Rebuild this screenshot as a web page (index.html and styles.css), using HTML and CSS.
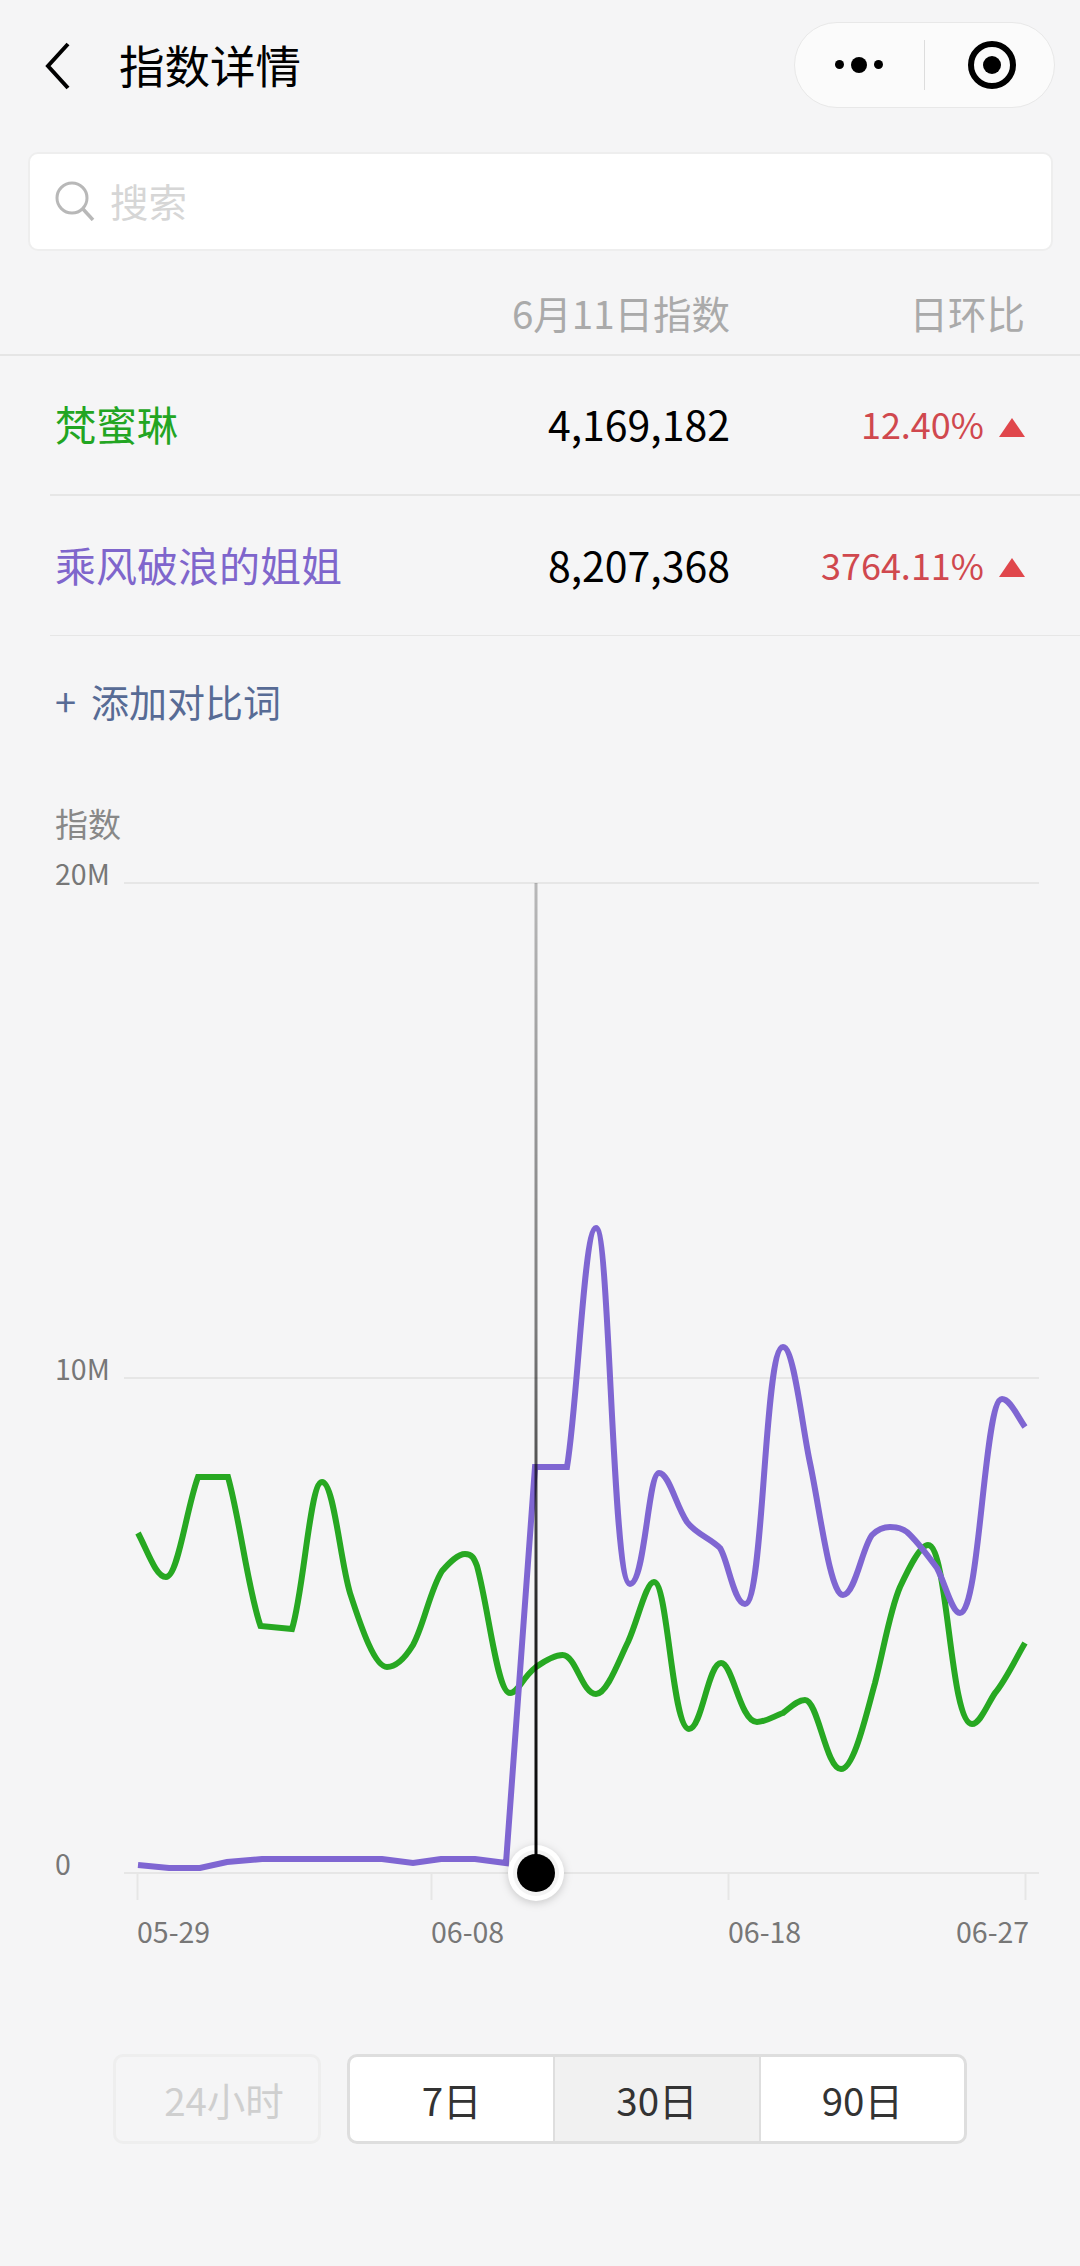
FILE: index.html
```html
<!DOCTYPE html>
<html lang="zh">
<head>
<meta charset="utf-8">
<title>指数详情</title>
<link rel="stylesheet" href="styles.css">
</head>
<body>
<div class="page">
  <header class="nav">
    <svg class="back" width="28" height="48" viewBox="0 0 28 48"><path d="M24 2 L4 24 L24 46" fill="none" stroke="#000" stroke-width="4"/></svg>
    <h1 class="title">指数详情</h1>
    <div class="capsule">
      <div class="cap-dots"><i class="dot small"></i><i class="dot big"></i><i class="dot small"></i></div>
      <i class="cap-line"></i>
      <div class="cap-target"><i class="target-core"></i></div>
    </div>
  </header>

  <div class="search">
    <svg class="search-icon" width="40" height="40" viewBox="0 0 40 40"><circle cx="17" cy="17" r="15" fill="none" stroke="#b8b8b8" stroke-width="3"/><path d="M28 28 L38 39" stroke="#b8b8b8" stroke-width="3.5" fill="none"/></svg>
    <span class="search-text">搜索</span>
  </div>

  <div class="table-head">
    <span class="col-value">6月11日指数</span>
    <span class="col-rate">日环比</span>
  </div>

  <div class="row row-thick">
    <span class="name green">梵蜜琳</span>
    <span class="col-value num">4,169,182</span>
    <span class="col-rate pct">12.40%<i class="tri"></i></span>
  </div>
  <div class="row">
    <span class="name purple">乘风破浪的姐姐</span>
    <span class="col-value num">8,207,368</span>
    <span class="col-rate pct">3764.11%<i class="tri"></i></span>
  </div>

  <div class="add"><span class="plus">+</span>添加对比词</div>

  <div class="chart-title">指数</div>

  <svg class="chart" width="1080" height="1170" viewBox="0 830 1080 1170">
    <defs>
      <linearGradient id="crossFade" x1="0" y1="0" x2="0" y2="1">
        <stop offset="0" stop-color="#000" stop-opacity=".25"/>
        <stop offset="0.45" stop-color="#000" stop-opacity=".5"/>
        <stop offset="0.75" stop-color="#000" stop-opacity=".85"/>
        <stop offset="1" stop-color="#000"/>
      </linearGradient>
    </defs>
    <g class="grid">
      <line x1="124" y1="883" x2="1039" y2="883"/>
      <line x1="124" y1="1378" x2="1039" y2="1378"/>
      <line x1="124" y1="1873" x2="1039" y2="1873"/>
      <line x1="137.5" y1="1873" x2="137.5" y2="1900"/>
      <line x1="431.5" y1="1873" x2="431.5" y2="1900"/>
      <line x1="728.5" y1="1873" x2="728.5" y2="1900"/>
      <line x1="1025.5" y1="1873" x2="1025.5" y2="1900"/>
    </g>
    <g class="axis">
      <text x="55" y="885">20M</text>
      <text x="55" y="1380">10M</text>
      <text x="55" y="1875">0</text>
      <text x="137" y="1943">05-29</text>
      <text x="431" y="1943">06-08</text>
      <text x="728" y="1943">06-18</text>
      <text x="956" y="1943">06-27</text>
    </g>
    <path class="line line-green" d="M138 1533 C148 1552 156 1577 166 1577 C178 1577 186 1510 198 1477 L228 1477 C240 1520 248 1590 260.5 1626 L292 1629 C304 1590 310 1482 322 1482 C334 1482 340 1560 350 1593 C362 1630 375 1667 387 1667 C396 1667 405 1658 413 1645 C424 1625 430 1590 442 1571 C450 1562 458 1554 465 1554 C472 1554 474 1558 477 1566 C489 1610 497 1693 510 1693 C518 1693 522 1678 536 1667 C546 1660 555 1655 562.5 1655 C576 1655 582 1694 596 1694 C607 1694 619 1660 628 1642 C638 1620 646 1582 654 1582 C668 1582 672 1729 689 1729 C702 1729 708 1663 721 1663 C733 1663 740 1722 757 1722 C766 1722 774 1716 783 1713 C790 1708 797 1700 805 1700 C818 1700 826 1769 841 1769 C854 1769 866 1715 875 1683 C884 1648 890 1610 900 1587 C908 1570 920 1545 928 1545 C948 1545 950 1724 972 1724 C980 1724 987 1705 995 1693 C1006 1680 1016 1658 1025 1643"/>
    <path class="line line-purple" d="M138 1865 L169 1868 L200 1868 L227 1862 L262 1859 L382 1859 L413 1863 L441 1859 L475 1859 L506 1863 L535 1467 L567 1467 C578 1400 584 1228 596 1228 C610 1228 612 1584 630 1584 C645 1584 648 1473 659 1473 C669 1473 676 1506 687 1522 C696 1534 710 1538 720 1548 C728 1560 734 1604 745 1604 C764 1604 764 1347 783 1347 C794 1347 802 1426 810 1463 C820 1510 830 1595 843 1595 C855 1595 862 1548 872 1535 C878 1529 884 1527 890 1527 C897 1527 902 1528 907 1532 C918 1542 928 1556 937 1568 C945 1583 952 1613 960 1613 C980 1613 984 1399 1002 1399 C1010 1399 1016 1414 1025 1427"/>
    <circle class="marker-ring" cx="536" cy="1873" r="28"/>
    <circle class="marker-inner" cx="536" cy="1873" r="23"/>
    <rect class="cross" x="534.5" y="883" width="3" height="990"/>
    <circle class="marker-dot" cx="536" cy="1873" r="19"/>
  </svg>

  <div class="ranges">
    <div class="range-off">24小时</div>
    <div class="range-group">
      <span class="seg">7日</span>
      <span class="seg active">30日</span>
      <span class="seg">90日</span>
    </div>
  </div>
</div>
</body>
</html>
```

FILE: styles.css
```css
* { box-sizing: border-box; margin: 0; padding: 0; }
html, body { background: #f5f5f6; }
body { font-family: "Noto Sans CJK SC", sans-serif; width: 1080px; height: 2266px; overflow: hidden; }
.page { width: 1080px; }
i { display: block; }

.nav { display: flex; align-items: center; height: 130px; padding: 0 25px 0 44px; }
.back { flex: none; margin-top: 2px; }
.title { font-size: 45.5px; font-weight: 400; color: #000; margin: 0 0 0 47px; line-height: 1; flex: 1; }
.capsule { width: 261px; height: 86px; margin-top: -1px; border: 1.5px solid #e8e8e8; border-radius: 43px; background: #fbfbfb; display: flex; align-items: center; }
.cap-dots { width: 129px; display: flex; align-items: center; justify-content: flex-end; gap: 7px; padding-right: 41px; }
.dot { background: #000; border-radius: 50%; }
.dot.small { width: 9px; height: 9px; }
.dot.big { width: 16px; height: 16px; }
.cap-line { width: 1px; height: 50px; background: #ddd; }
.cap-target { width: 48px; height: 48px; margin-left: 43px; border: 6px solid #000; border-radius: 50%; display: flex; align-items: center; justify-content: center; }
.target-core { width: 18px; height: 18px; border-radius: 50%; background: #000; }

.search { margin: 22px 27px 0 28px; height: 99px; background: #fff; border: 2px solid #eeeeee; border-radius: 10px; display: flex; align-items: center; padding: 0 0 0 25px; }
.search-icon { margin-top: -2px; }
.search-text { font-size: 38.5px; color: #d6d6d6; margin: -2px 0 0 15px; line-height: 1; }

.table-head { display: flex; justify-content: flex-end; align-items: center; height: 105px; padding: 19px 55px 0 0; border-bottom: 2px solid #e5e5e5; font-size: 38.5px; color: #aaa; }
.col-value { width: 240px; text-align: right; white-space: nowrap; }
.col-rate { width: 295px; text-align: right; white-space: nowrap; display: flex; justify-content: flex-end; align-items: center; }

.row { display: flex; align-items: center; height: 140px; margin-left: 50px; padding: 0 55px 4px 5px; border-bottom: 1px solid #e6e6e6; }
.row-thick { height: 140px; border-bottom-width: 2px; }
.name { font-size: 41px; flex: 1; white-space: nowrap; }
.green { color: #22a522; }
.purple { color: #7f66cc; }
.num { font-size: 41px; color: #000; }
.pct { font-size: 36px; color: #d0484e; }
.tri { width: 0; height: 0; margin: 8px 0 0 15px; border-left: 13.5px solid transparent; border-right: 13.5px solid transparent; border-bottom: 19px solid #e0474c; }

.add { margin: 37px 0 0 55px; font-size: 38px; line-height: 56px; color: #576b95; display: flex; }
.plus { width: 36px; }
.chart-title { margin: 72px 0 0 55px; font-size: 33px; line-height: 44px; color: #888; }
.chart { display: block; margin-top: -15px; }
.grid line { stroke: #e6e6e6; stroke-width: 2; }
.axis text { font-size: 28.5px; fill: #777; }
.line { fill: none; stroke-width: 6; stroke-linejoin: miter; }
.line-green { stroke: #27a822; }
.line-purple { stroke: #7f66d2; }
.cross { fill: url(#crossFade); }
.marker-ring { fill: #fff; filter: drop-shadow(0 2px 4px rgba(0,0,0,.18)); }
.marker-inner { fill: #f3f3f3; }
.marker-dot { fill: #000; }

.ranges { display: flex; margin: 54px 0 0 113px; gap: 26px; height: 90px; }
.range-off { width: 208px; border: 3px solid #eeeeee; border-radius: 10px; color: #cfcfcf; font-size: 38.5px; display: flex; align-items: center; justify-content: center; padding-left: 14px; }
.range-group { width: 620px; display: flex; border: 3px solid #dedede; border-radius: 10px; background: #fff; overflow: hidden; }
.seg { flex: 1; display: flex; align-items: center; justify-content: center; font-size: 38.5px; color: #333; }
.seg + .seg { border-left: 2px solid #dedede; }
.seg.active { background: #f1f1f1; }
```
